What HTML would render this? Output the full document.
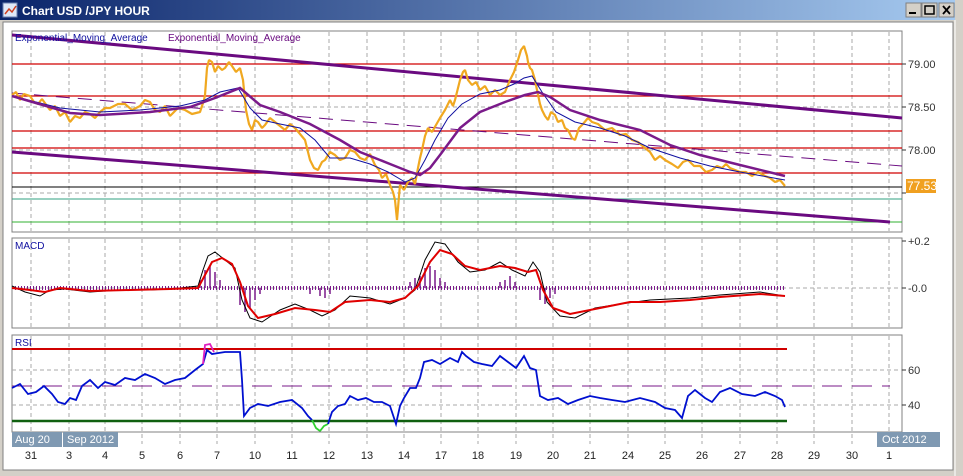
<!DOCTYPE html>
<html><head><meta charset="utf-8"><style>
html,body{margin:0;padding:0;width:963px;height:476px;overflow:hidden;background:#d4d0c8;font-family:"Liberation Sans",sans-serif}
</style></head><body>
<svg width="963" height="476" viewBox="0 0 963 476" xmlns="http://www.w3.org/2000/svg" font-family="Liberation Sans, sans-serif">
<defs><linearGradient id="tb" x1="0" x2="1"><stop offset="0" stop-color="#0a246a"/><stop offset="1" stop-color="#a6caf0"/></linearGradient></defs>
<rect x="0" y="0" width="963" height="476" fill="#d4d0c8"/>
<rect x="0" y="0" width="955" height="20" fill="url(#tb)"/>
<rect x="3" y="3" width="14" height="14" fill="#dfe8f8" stroke="#6a7fb0"/>
<polyline points="5,14 9,9 12,12 16,6" fill="none" stroke="#d04020" stroke-width="1.5"/>
<text x="22" y="15" font-size="12" font-weight="bold" fill="#fff">Chart USD /JPY  HOUR</text>
<g fill="#d4d0c8" stroke="#808080"><rect x="906" y="3" width="15" height="14"/><rect x="922" y="3" width="15" height="14"/><rect x="939" y="3" width="15" height="14"/></g>
<rect x="909" y="12" width="7" height="2" fill="#000"/>
<rect x="925" y="6" width="9" height="8" fill="none" stroke="#000" stroke-width="1.5"/>
<path d="M943 6l7 8M950 6l-7 8" stroke="#000" stroke-width="1.8"/>
<rect x="955" y="0" width="8" height="476" fill="#d4d0c8"/><line x1="955" y1="20" x2="955" y2="476" stroke="#fff"/>
<rect x="3" y="22" width="950" height="448" fill="#fff" stroke="#808080"/>
<rect x="12" y="31" width="890" height="201" fill="#fff" stroke="#808080"/>
<rect x="12" y="238" width="890" height="90" fill="#fff" stroke="#808080"/>
<rect x="12" y="335" width="890" height="97" fill="#fff" stroke="#808080"/>
<g stroke="#aaa" stroke-dasharray="4,3">
<path d="M31 32V231M69 32V231M105 32V231M142 32V231M180 32V231M217 32V231M255 32V231M292 32V231M329 32V231M367 32V231M404 32V231M441 32V231M478 32V231M516 32V231M553 32V231M590 32V231M628 32V231M665 32V231M702 32V231M740 32V231M777 32V231M814 32V231M852 32V231M889 32V231"/>
<path d="M31 239V327M69 239V327M105 239V327M142 239V327M180 239V327M217 239V327M255 239V327M292 239V327M329 239V327M367 239V327M404 239V327M441 239V327M478 239V327M516 239V327M553 239V327M590 239V327M628 239V327M665 239V327M702 239V327M740 239V327M777 239V327M814 239V327M852 239V327M889 239V327"/>
<path d="M31 336V444M69 336V444M105 336V444M142 336V444M180 336V444M217 336V444M255 336V444M292 336V444M329 336V444M367 336V444M404 336V444M441 336V444M478 336V444M516 336V444M553 336V444M590 336V444M628 336V444M665 336V444M702 336V444M740 336V444M777 336V444M814 336V444M852 336V444M889 336V444"/>
<path d="M12 64H902M12 107H902M12 150H902M12 193H902M12 288H902M12 370H902M12 405H902"/>
</g>
<g stroke="#d00000" stroke-width="1.2"><path d="M12 64H902M12 96H902M12 131H902M12 148H902M12 173H902"/></g>
<path d="M12 187H902" stroke="#000"/><path d="M12 199H902" stroke="#30a080"/><path d="M12 222H902" stroke="#30b030"/>
<path d="M12 35L902 118" stroke="#6a0a80" stroke-width="3"/>
<path d="M12 152L890 222" stroke="#6a0a80" stroke-width="3"/>
<path d="M12 93L902 166" stroke="#6a0a80" stroke-width="1" stroke-dasharray="14,8"/>
<polyline fill="none" stroke="#f0a820" stroke-width="2.2" stroke-linejoin="bevel" points="12,95 16,92 20,100 24,94 30,96 34,102 38,104 42,99 50,110 55,106 60,116 65,112 70,122 75,116 80,118 85,112 90,114 95,118 100,112 105,108 110,108 118,104 125,104 132,110 140,106 145,100 150,102 155,110 160,112 165,106 170,116 178,108 185,110 192,114 200,112 204,100 205,95 207,68 209,60 212,62 215,72 218,66 222,70 225,68 229,62 232,66 236,72 240,68 243,80 246,110 249,124 252,130 255,120 258,122 262,128 265,125 270,118 275,122 280,126 285,130 290,124 295,128 300,134 305,140 308,152 310,160 314,168 318,170 322,162 325,160 330,152 335,155 340,160 345,158 350,150 355,152 360,158 365,160 370,154 375,165 379,170 382,178 386,174 390,185 393,192 395,200 397,220 399,196 400,185 404,190 408,182 412,178 415,184 418,168 420,158 422,150 425,136 428,128 432,132 436,125 440,118 445,110 448,104 450,100 453,106 455,100 458,88 460,80 463,72 465,70 468,80 472,85 476,82 480,90 485,86 490,95 495,90 500,95 505,92 510,80 514,72 518,60 521,50 524,46 527,56 528,62 530,68 532,70 535,80 537,90 540,104 542,110 545,116 548,120 551,112 555,115 558,122 562,120 565,128 568,130 572,138 575,140 579,128 583,124 588,118 592,122 598,124 605,130 612,128 620,135 626,134 632,140 638,142 645,148 650,152 655,160 660,156 665,160 672,164 678,168 683,162 688,160 694,166 700,166 706,172 712,170 717,166 722,168 726,164 730,168 735,170 740,172 746,172 752,176 758,172 765,176 770,178 775,182 780,180 785,186"/>
<polyline fill="none" stroke="#1010a0" stroke-width="1" points="12,96 60,108 100,112 140,110 180,106 205,100 220,92 238,88 250,108 262,120 280,124 300,128 315,140 330,158 350,158 370,164 388,172 405,182 415,178 425,160 435,140 448,118 462,104 480,94 500,90 514,84 524,78 532,76 542,92 556,112 575,122 600,128 625,136 650,148 680,158 710,166 740,172 785,180"/>
<polyline fill="none" stroke="#7a1a8a" stroke-width="2.5" points="12,96 70,113 100,115 150,112 190,107 215,98 240,88 260,105 280,112 310,124 340,140 360,152 390,164 410,172 420,175 430,168 440,155 460,128 480,112 505,102 525,95 538,92 550,97 570,110 600,120 640,130 670,145 700,155 740,165 785,176"/>
<rect x="906" y="179" width="30" height="14" fill="#f0a020"/><text x="907" y="190" font-size="12" fill="#fff">77.53</text>
<text x="15" y="41" font-size="10" fill="#1010a0">Exponential_Moving_Average</text><text x="168" y="41" font-size="10" fill="#6a0a80">Exponential_Moving_Average</text>
<g font-size="11" fill="#333"><text x="908" y="68">79.00</text><text x="908" y="111">78.50</text><text x="908" y="154">78.00</text><text x="908" y="245">+0.2</text><text x="908" y="292">-0.0</text><text x="908" y="374">60</text><text x="908" y="409">40</text></g>
<g stroke="#333"><path d="M902 64h4M902 107h4M902 150h4M902 193h4M902 241h4M902 288h4M902 370h4M902 405h4"/></g>
<text x="15" y="249" font-size="10" fill="#1010a0">MACD</text>
<path d="M15 288H785" stroke="#7a1a8a" stroke-width="4" stroke-dasharray="1,2"/>
<g stroke="#7a1a8a" stroke-width="1.5"><path d="M200 288V280M205 288V270M210 288V266M215 288V272M220 288V280M240 288V305M245 288V312M250 288V308M255 288V300M260 288V294M310 288V294M320 288V296M325 288V298M330 288V294M410 288V282M415 288V278M420 288V276M425 288V268M430 288V266M435 288V270M440 288V278M445 288V282M500 288V282M505 288V280M510 288V276M515 288V282M540 288V300M545 288V304M550 288V298M555 288V294"/></g>
<polyline fill="none" stroke="#000" stroke-width="1" points="12,286 25,292 40,296 50,290 65,289 90,292 120,290 150,290 180,288 198,286 203,270 208,256 215,252 225,260 235,268 242,300 250,318 262,322 280,310 295,304 310,310 322,316 335,310 350,296 370,298 390,304 405,298 415,290 425,260 435,242 445,244 458,262 470,272 485,270 500,262 512,270 525,276 533,262 540,272 547,302 560,316 575,318 595,308 620,304 650,300 690,298 720,295 760,292 785,296"/>
<polyline fill="none" stroke="#e00000" stroke-width="2" points="12,288 30,290 45,292 60,288 90,291 130,290 170,289 198,288 205,275 212,262 222,258 232,264 240,282 248,306 258,318 275,314 295,308 315,310 330,312 345,302 370,300 390,302 405,298 418,286 430,262 440,250 452,254 465,266 480,270 500,266 515,268 528,272 536,270 543,290 553,308 570,314 600,308 630,302 660,302 690,300 720,297 760,294 785,296"/>
<text x="15" y="346" font-size="10" fill="#1010a0">RSI</text>
<path d="M12 349H787" stroke="#d00000" stroke-width="2"/>
<path d="M12 386H890" stroke="#7a1a8a" stroke-width="1" stroke-dasharray="20,10"/>
<path d="M12 421H787" stroke="#106010" stroke-width="2.5"/>
<polyline fill="none" stroke="#0010d0" stroke-width="1.8" points="12,388 20,384 28,394 36,392 44,386 52,394 58,402 65,404 70,398 76,400 82,386 90,380 98,388 105,382 115,385 125,378 135,380 145,374 155,378 165,384 175,380 185,378 195,370 203,364 207,350 212,354 225,352 240,352 242,380 244,416 250,408 258,404 268,406 280,402 292,400 302,408 308,416 312,420"/>
<polyline fill="none" stroke="#e020c0" stroke-width="1.8" points="203,364 205,345 210,344 214,352"/>
<polyline fill="none" stroke="#30d030" stroke-width="1.8" points="312,420 316,428 320,431 324,426 328,424"/>
<polyline fill="none" stroke="#0010d0" stroke-width="1.8" points="328,424 332,412 338,406 345,404 350,396 358,400 366,398 374,402 382,402 390,406 394,418 396,424 400,406 404,398 410,388 416,388 420,378 424,362 432,360 440,364 450,358 458,362 462,352 466,356 474,362 482,364 492,366 500,356 508,362 516,368 524,356 530,368 536,370 540,396 548,400 558,398 568,404 578,400 590,396 600,398 612,400 625,402 640,398 655,402 665,408 675,410 682,418 688,396 695,390 705,398 712,402 720,392 730,388 742,394 755,396 765,392 775,396 782,400 785,407"/>
<path d="M12 432H902" stroke="#808080"/>
<rect x="12" y="432" width="50" height="15" fill="#7f99b2"/><text x="15" y="443" font-size="11" fill="#fff">Aug 20</text>
<rect x="63" y="432" width="55" height="15" fill="#7f99b2"/><text x="67" y="443" font-size="11" fill="#fff">Sep 2012</text>
<rect x="877" y="432" width="63" height="15" fill="#7f99b2"/><text x="882" y="443" font-size="11" fill="#fff">Oct 2012</text>
<g font-size="11" fill="#222" text-anchor="middle">
<text x="31" y="459">31</text><text x="69" y="459">3</text><text x="105" y="459">4</text><text x="142" y="459">5</text><text x="180" y="459">6</text><text x="217" y="459">7</text><text x="255" y="459">10</text><text x="292" y="459">11</text><text x="329" y="459">12</text><text x="367" y="459">13</text><text x="404" y="459">14</text><text x="441" y="459">17</text><text x="478" y="459">18</text><text x="516" y="459">19</text><text x="553" y="459">20</text><text x="590" y="459">21</text><text x="628" y="459">24</text><text x="665" y="459">25</text><text x="702" y="459">26</text><text x="740" y="459">27</text><text x="777" y="459">28</text><text x="814" y="459">29</text><text x="852" y="459">30</text><text x="889" y="459">1</text>
</g>
</svg>
</body></html>
